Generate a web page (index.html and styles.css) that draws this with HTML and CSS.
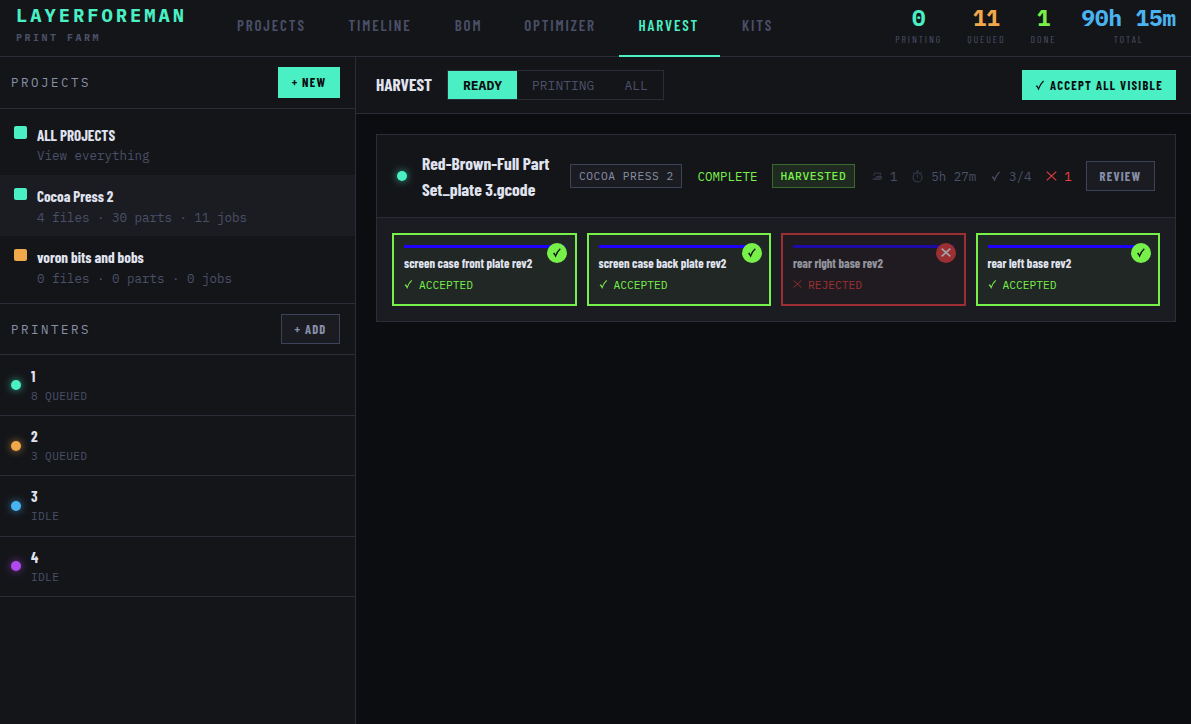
FILE: index.html
```html
<!DOCTYPE html>
<html lang="en">
<head>
  <meta charset="UTF-8">
  <meta name="viewport" content="width=device-width, initial-scale=1">
  <title>LayerForeman</title>
  <link rel="stylesheet" href="styles.css">
</head>
<body>
  <!-- Shared icons -->
  <svg class="sprite">
    <symbol id="check" viewBox="0 0 10 12"><path d="M1 7.6 L2 7 L3.5 10 Q5.2 5 8.6 2" fill="none" stroke="currentColor"/></symbol>
    <symbol id="cross" viewBox="0 0 12 12"><path d="M.8 1.3 L11.2 10.7 M11.2 1.3 L.8 10.7" fill="none" stroke="currentColor"/></symbol>
    <symbol id="timer" viewBox="0 0 12 14"><circle cx="6" cy="8" r="4.9" fill="none" stroke="currentColor"/><path d="M4.5 1h3M6 1v2M6 5v3M1.3 3.5l1-1M10.7 3.5l-1-1" fill="none" stroke="currentColor"/></symbol>
    <symbol id="printer" viewBox="0 0 12 12"><path d="M3 2.5h7.5L9.5 6M3 2.5L1.8 6M1 9.5h8l2-3.5v4h-9z" fill="none" stroke="currentColor"/><path d="M5 6h6.5v2H4z" fill="currentColor"/></symbol>
  </svg>

  <header class="topbar">
    <div class="logo">
      <div class="logo-name">LAYERFOREMAN</div>
      <div class="logo-sub">PRINT FARM</div>
    </div>
    <nav class="tabs">
      <a class="tab"><span>PROJECTS</span></a>
      <a class="tab"><span>TIMELINE</span></a>
      <a class="tab"><span>BOM</span></a>
      <a class="tab"><span>OPTIMIZER</span></a>
      <a class="tab active"><span>HARVEST</span></a>
      <a class="tab"><span>KITS</span></a>
    </nav>
    <div class="stats">
      <div class="stat"><b class="teal">0</b><span>PRINTING</span></div>
      <div class="stat"><b class="orange">11</b><span>QUEUED</span></div>
      <div class="stat"><b class="green">1</b><span>DONE</span></div>
      <div class="stat"><b class="blue">90h 15m</b><span>TOTAL</span></div>
    </div>
  </header>

  <div class="layout">
    <aside class="sidebar">
      <div class="side-head projects-head">
        <span class="side-title">PROJECTS</span>
        <button class="btn primary new-btn">+ NEW</button>
      </div>
      <div class="projects">
        <div class="project">
          <i class="swatch bg-teal"></i>
          <div><div class="name">ALL PROJECTS</div><div class="sub">View everything</div></div>
        </div>
        <div class="project selected">
          <i class="swatch bg-teal"></i>
          <div><div class="name">Cocoa Press 2</div><div class="sub">4 files · 30 parts · 11 jobs</div></div>
        </div>
        <div class="project">
          <i class="swatch bg-orange"></i>
          <div><div class="name">voron bits and bobs</div><div class="sub">0 files · 0 parts · 0 jobs</div></div>
        </div>
      </div>
      <div class="side-head">
        <span class="side-title">PRINTERS</span>
        <button class="btn add-btn">+ ADD</button>
      </div>
      <div class="printer">
        <i class="dot teal"></i>
        <div><div class="name">1</div><div class="state">8 QUEUED</div></div>
      </div>
      <div class="printer">
        <i class="dot orange"></i>
        <div><div class="name">2</div><div class="state">3 QUEUED</div></div>
      </div>
      <div class="printer">
        <i class="dot blue"></i>
        <div><div class="name">3</div><div class="state">IDLE</div></div>
      </div>
      <div class="printer">
        <i class="dot purple"></i>
        <div><div class="name">4</div><div class="state">IDLE</div></div>
      </div>
    </aside>

    <main class="main">
      <div class="toolbar">
        <h1>HARVEST</h1>
        <div class="filter">
          <button class="on">READY</button>
          <button>PRINTING</button>
          <button>ALL</button>
        </div>
        <button class="btn primary accept-btn"><svg class="ico"><use href="#check"/></svg>ACCEPT ALL VISIBLE</button>
      </div>

      <section class="job">
        <div class="job-head">
          <i class="dot teal"></i>
          <h2>Red-Brown-Full Part<br>Set_plate 3.gcode</h2>
          <span class="tag">COCOA PRESS 2</span>
          <span class="complete">COMPLETE</span>
          <span class="tag harvested">HARVESTED</span>
          <div class="metrics">
            <span class="metric faint"><svg class="ico"><use href="#printer"/></svg><em>1</em></span>
            <span class="metric faint"><svg class="ico timer"><use href="#timer"/></svg><em>5h 27m</em></span>
            <span class="metric"><svg class="ico"><use href="#check"/></svg><em>3/4</em></span>
            <span class="metric bad"><svg class="ico"><use href="#cross"/></svg><em>1</em></span>
          </div>
          <button class="btn review-btn">REVIEW</button>
        </div>
        <div class="parts">
          <div class="part">
            <div class="bar"></div>
            <div class="part-name">screen case front plate rev2</div>
            <div class="part-state"><svg class="ico"><use href="#check"/></svg>ACCEPTED</div>
            <div class="badge"><svg class="ico"><use href="#check"/></svg></div>
          </div>
          <div class="part">
            <div class="bar"></div>
            <div class="part-name">screen case back plate rev2</div>
            <div class="part-state"><svg class="ico"><use href="#check"/></svg>ACCEPTED</div>
            <div class="badge"><svg class="ico"><use href="#check"/></svg></div>
          </div>
          <div class="part rejected">
            <div class="bar"></div>
            <div class="part-name">rear right base rev2</div>
            <div class="part-state"><svg class="ico"><use href="#cross"/></svg>REJECTED</div>
            <div class="badge"><svg class="ico"><use href="#cross"/></svg></div>
          </div>
          <div class="part">
            <div class="bar"></div>
            <div class="part-name">rear left base rev2</div>
            <div class="part-state"><svg class="ico"><use href="#check"/></svg>ACCEPTED</div>
            <div class="badge"><svg class="ico"><use href="#check"/></svg></div>
          </div>
        </div>
      </section>
    </main>
  </div>
</body>
</html>
```
FILE: styles.css
```css
:root {
  --bg: #0c0d10;
  --panel: #141519;
  --raised: #1b1c22;
  --line: #2a2d38;
  --line2: #3c4258;
  --text: #e0e4f0;
  --mid: #8890a8;
  --dim: #4a5068;
  --teal: #4af0c4;
  --orange: #f0a84a;
  --blue: #4ab4f0;
  --green: #78f04a;
  --purple: #b04af0;
  --red: #f03c3c;
  --mono: "IBM Plex Mono", "Liberation Mono", monospace;
  --cond: "Barlow Condensed", "Roboto Condensed", "Liberation Sans Narrow", Roboto, sans-serif;
}
* {
  box-sizing: border-box;
}
body {
  margin: 0;
  height: 724px;
  overflow: hidden;
  background: var(--bg);
  color: var(--text);
  font-family: var(--cond);
  font-stretch: 75%;
}
h1, h2 {
  margin: 0;
}
button {
  font-family: inherit;
  font-stretch: inherit;
  margin: 0;
  padding: 0;
}
i, em {
  font-style: normal;
}
.sprite {
  display: none;
}
.ico {
  width: 10px;
  height: 12px;
  flex: none;
  stroke-width: 1.2;
}
.teal { color: var(--teal); }
.orange { color: var(--orange); }
.blue { color: var(--blue); }
.green { color: var(--green); }
.purple { color: var(--purple); }
.bg-teal { background: var(--teal); }
.bg-orange { background: var(--orange); }

/* Top bar */
.topbar {
  display: flex;
  height: 57px;
  padding: 0 15px 0 16px;
  background: var(--panel);
  border-bottom: 1px solid var(--line);
}
.logo {
  width: 201px;
  padding-top: 5px;
  font-family: var(--mono);
  font-weight: bold;
}
.logo-name {
  font-size: 18.75px;
  letter-spacing: 3px;
  line-height: 21px;
  color: var(--teal);
}
.logo-sub {
  margin-top: 5px;
  font-size: 10px;
  letter-spacing: 2.5px;
  line-height: 14px;
  color: var(--dim);
}
.tabs {
  display: grid;
  grid-template-columns: 109px 104px 67px 112px 101px 73px;
  gap: 2.4px;
}
.tab {
  height: 57px;
  padding-left: 20px;
  font-size: 15px;
  font-weight: 600;
  letter-spacing: 1.85px;
  line-height: 51px;
  color: var(--dim);
  border-bottom: 2px solid transparent;
}
.tab.active {
  color: var(--teal);
  border-color: var(--teal);
}
.stats {
  display: flex;
  gap: 25px;
  margin-left: auto;
  padding-top: 5px;
}
.stat {
  display: flex;
  flex-direction: column;
  align-items: center;
}
.stat b {
  font-family: var(--mono);
  font-size: 22.5px;
  line-height: 25px;
}
.stat span {
  margin-top: 2px;
  font-size: 10px;
  letter-spacing: 1.9px;
  line-height: 14px;
  color: var(--dim);
}

/* Sidebar */
.layout {
  display: flex;
  height: 667px;
}
.sidebar {
  width: 356px;
  background: var(--panel);
  border-right: 1px solid var(--line);
}
.side-head {
  display: flex;
  align-items: center;
  justify-content: space-between;
  height: 51px;
  padding: 0 15px 0 11px;
  border-bottom: 1px solid var(--line);
}
.projects-head {
  height: 52px;
}
.side-title {
  font-family: var(--mono);
  font-size: 12.5px;
  letter-spacing: 2.5px;
  line-height: 17px;
  color: var(--mid);
}
.projects-head .side-title {
  padding-bottom: 1px;
}
.btn {
  display: flex;
  align-items: center;
  justify-content: center;
  height: 30px;
  font-size: 12.5px;
  font-weight: 700;
  letter-spacing: 1.25px;
  color: var(--mid);
  background: var(--raised);
  border: 1px solid var(--line2);
}
.btn.primary {
  color: #0c0d10;
  background: var(--teal);
  border: none;
}
.new-btn {
  width: 62px;
  height: 31px;
  padding-bottom: 1px;
}
.add-btn {
  width: 59px;
}
.projects {
  height: 195px;
  padding: 5px 0;
  border-bottom: 1px solid var(--line);
}
.project {
  display: flex;
  gap: 10px;
  height: 61px;
  padding: 12px 14px;
}
.project.selected {
  background: var(--raised);
}
.swatch {
  width: 13px;
  height: 13px;
  border-radius: 2px;
}
.project + .project .swatch {
  height: 12px;
  margin-top: 1px;
}
.name {
  font-size: 15px;
  font-weight: 700;
  line-height: 18px;
}
.project .sub {
  margin-top: 1px;
  font-family: var(--mono);
  font-size: 12.5px;
  line-height: 20px;
  color: var(--dim);
}
.project + .project .sub {
  margin-top: 2px;
}
.printer {
  display: flex;
  align-items: center;
  gap: 10px;
  height: 60.3px;
  padding-left: 11px;
  border-bottom: 1px solid var(--line);
}
.side-head + .printer {
  height: 61px;
}
.dot {
  width: 10px;
  height: 10px;
  flex: none;
  border-radius: 50%;
  background: currentColor;
  box-shadow: 0 0 8px -1px currentColor;
}
.printer .name {
  padding-top: 1px;
}
.printer .state {
  margin-top: 1px;
  font-family: var(--mono);
  font-size: 11.25px;
  letter-spacing: .3px;
  line-height: 19px;
  color: var(--dim);
}

/* Main */
.main {
  flex: 1;
}
.toolbar {
  display: flex;
  align-items: center;
  height: 57px;
  padding: 0 15px 0 20px;
  background: var(--panel);
  border-bottom: 1px solid var(--line);
}
.toolbar h1 {
  width: 71px;
  padding-bottom: 2px;
  font-size: 17.2px;
  font-weight: 700;
}
.filter {
  display: flex;
  height: 30px;
  border: 1px solid var(--line);
}
.filter button {
  padding: 0 15px;
  font-family: var(--mono);
  font-size: 13px;
  color: var(--dim);
  background: none;
  border: none;
}
.filter .on {
  font-weight: bold;
  color: #0c0d10;
  background: var(--teal);
}
.accept-btn {
  gap: 5px;
  width: 154px;
  margin-left: auto;
}

/* Job card */
.job {
  margin: 20px 15px 0 20px;
  background: var(--raised);
  border: 1px solid var(--line);
}
.job-head {
  display: flex;
  align-items: center;
  height: 83px;
  padding: 0 20px;
  background: var(--panel);
  border-bottom: 1px solid var(--line);
}
.job-head h2 {
  width: 133px;
  margin: 0 0 0 15px;
  font-size: 17.5px;
  font-weight: 700;
  line-height: 26px;
  white-space: nowrap;
}
.tag {
  width: 112px;
  height: 24px;
  margin-left: 15px;
  padding-left: 8px;
  font-family: var(--mono);
  font-size: 11.25px;
  letter-spacing: .55px;
  line-height: 22px;
  color: var(--mid);
  background: var(--raised);
  border: 1px solid var(--line2);
}
.complete {
  margin-left: 15.5px;
  font-family: var(--mono);
  font-size: 12.5px;
  color: var(--green);
}
.tag.harvested {
  width: 83px;
  margin-left: 14.5px;
  padding-left: 7.5px;
  font-weight: 500;
  color: var(--green);
  background: #1f2b20;
  border-color: #3c6a2e;
}
.metrics {
  display: flex;
  gap: 14.7px;
  margin-left: 17px;
  font-family: var(--mono);
  font-size: 12.5px;
  color: var(--dim);
}
.metric {
  display: flex;
  align-items: center;
  gap: 8px;
}
.metric.faint .ico {
  opacity: .6;
}
.ico.timer {
  width: 11px;
  height: 13px;
}
.metric.bad {
  gap: 7px;
  color: var(--red);
}
.metric.bad .ico {
  width: 11px;
}
.review-btn {
  width: 69px;
  margin-left: auto;
}

/* Parts */
.parts {
  display: grid;
  grid-template-columns: repeat(4, 1fr);
  gap: 10px;
  padding: 15px;
}
.part {
  position: relative;
  height: 73px;
  padding: 10px;
  background: #202724;
  border: 2px solid var(--green);
}
.part.rejected {
  background: #241b20;
  border-color: var(--red);
  opacity: .6;
}
.bar {
  height: 3px;
  background: #2000ff;
}
.part-name {
  margin-top: 6px;
  font-size: 12.5px;
  font-weight: 700;
  line-height: 18px;
}
.part-state {
  display: flex;
  align-items: center;
  gap: 6px;
  height: 16px;
  margin-top: 4px;
  font-family: var(--mono);
  font-size: 11.25px;
  color: var(--green);
}
.part-state .ico {
  width: 9px;
}
.rejected .part-state {
  color: var(--red);
}
.badge {
  position: absolute;
  top: 8px;
  right: 7.5px;
  display: flex;
  align-items: center;
  justify-content: center;
  width: 20px;
  height: 20px;
  border-radius: 50%;
  color: #0c0d10;
  background: var(--green);
}
.badge .ico {
  padding-bottom: 1px;
  stroke-width: 1.4;
}
.rejected .badge {
  color: #fff;
  background: var(--red);
}
.rejected .badge .ico {
  stroke-width: 2;
}
```
